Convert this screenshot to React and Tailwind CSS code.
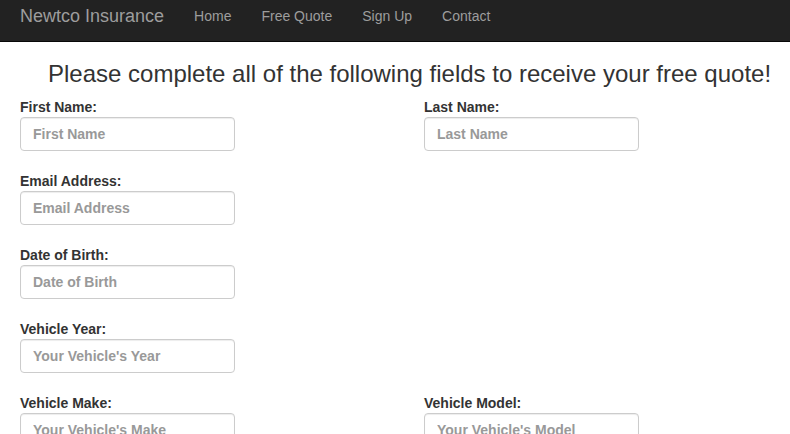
const font = { fontFamily: '"Liberation Sans", Arial, sans-serif' };

const rows = [
  [
    { label: "First Name:", ph: "First Name" },
    { label: "Last Name:", ph: "Last Name" },
  ],
  [{ label: "Email Address:", ph: "Email Address" }],
  [{ label: "Date of Birth:", ph: "Date of Birth" }],
  [{ label: "Vehicle Year:", ph: "Your Vehicle's Year" }],
  [
    { label: "Vehicle Make:", ph: "Your Vehicle's Make" },
    { label: "Vehicle Model:", ph: "Your Vehicle's Model" },
  ],
];

function Field({ label, ph }) {
  return (
    <div className="w-[404px] shrink-0">
      <label className="block h-5 text-sm font-bold leading-5 text-[#333]">{label}</label>
      <input
        placeholder={ph}
        className="block h-[34px] w-[215px] rounded border border-[#ccc] bg-white px-3 text-sm font-bold text-[#555] shadow-[inset_0_1px_1px_rgba(0,0,0,0.075)] outline-none placeholder:text-[#999]"
      />
    </div>
  );
}

export default function App() {
  return (
    <div className="min-h-screen overflow-hidden bg-white" style={font}>
      <nav className="flex h-[42px] items-start border-b border-[#080808] bg-[#222] px-5 pt-[6px]">
        <a className="mr-[30px] text-lg leading-5 text-[#9d9d9d]">Newtco Insurance</a>
        <ul className="flex text-sm leading-5 text-[#9d9d9d]">
          <li className="mr-[30px]">Home</li>
          <li className="mr-[30px]">Free Quote</li>
          <li className="mr-[30px]">Sign Up</li>
          <li>Contact</li>
        </ul>
      </nav>
      <div className="px-5">
        <h1 className="mt-[19px] mb-[10px] pl-[28px] text-center text-2xl leading-[26px] whitespace-nowrap text-[#333]">
          Please complete all of the following fields to receive your free quote!
        </h1>
        <form className="flex flex-col gap-5">
          {rows.map((r, i) => (
            <div key={i} className="flex">
              {r.map((f) => (
                <Field key={f.label} {...f} />
              ))}
            </div>
          ))}
        </form>
      </div>
    </div>
  );
}
